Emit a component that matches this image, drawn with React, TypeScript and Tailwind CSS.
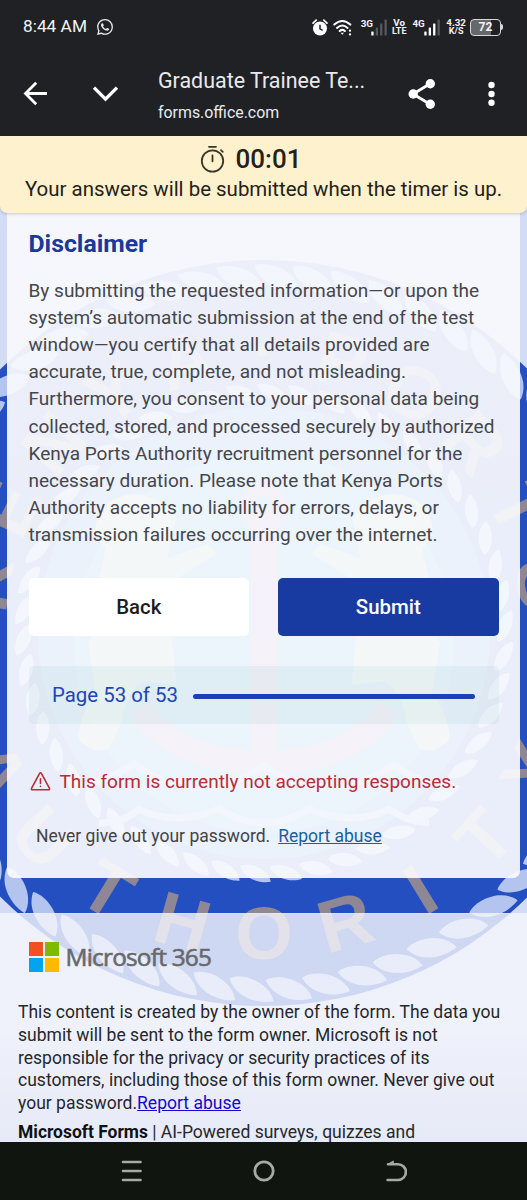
import type { ReactNode } from "react";

const LEAF = "M-25,-12 C-10,-19 20,-9 25,12 C8,16 -18,9 -25,-12 Z";

function Rope({ radius, count, scale, fill }: { radius: number; count: number; scale: number; fill: string }) {
  return (
    <g fill={fill}>
      {Array.from({ length: count }, (_, i) => (
        <path key={i} d={LEAF} transform={`rotate(${(i * 360) / count + 2}) translate(0 ${radius}) scale(${scale})`} />
      ))}
    </g>
  );
}

function RingText({ text, start, step, bottom }: { text: string; start: number; step: number; bottom?: boolean }) {
  return (
    <g fill="#8f8793" fontFamily="Liberation Sans" fontWeight="700" fontSize="74" textAnchor="middle">
      {text.split("").map((ch, i) => (
        <text key={i} transform={bottom ? `rotate(${start - i * step}) translate(0 326)` : `rotate(${start + i * step}) translate(0 -258)`}>
          {ch}
        </text>
      ))}
    </g>
  );
}

function Lion() {
  return (
    <g fill="#e6e48c" opacity="0.75">
      <path d="M88 -115 q14 -22 40 -24 q30 2 38 24 q8 16 -8 30 l8 34 q-18 8 -22 20 l30 38 q-8 16 -22 16 l-30 -8 q-6 -40 -20 -60 l-54 -34 8 -10 40 14 q-2 -20 -8 -40 z" />
      <path d="M92 0 q20 -14 50 -12 q26 6 34 22 l-8 50 q16 20 18 46 q-18 18 -32 8 l-12 -26 q-2 -24 -20 -40 l-34 4 z" />
    </g>
  );
}

function Emblem() {
  return (
    <svg className="absolute left-[-126px] top-[107px]" width="780" height="780" viewBox="-390 -390 780 780">
      <circle r="373" fill="#244fc0" />
      <Rope radius={357} count={60} scale={0.9} fill="#b3c4ee" />
      <RingText text="KENYA·PORTS" start={-80} step={16} />
      <RingText text="AUTHORITY" start={62.8} step={15.7} bottom />
      <circle r="226" fill="#3a86dc" />
      <circle cy="10" r="190" fill="#3fabe0" />
      <Rope radius={241} count={50} scale={0.62} fill="#b3c4ee" />
      <Lion />
      <g transform="scale(-1 1)">
        <Lion />
      </g>
      <g fill="none" stroke="#e07c9c" opacity="0.8">
        <path d="M0 -125 V130" strokeWidth="26" />
        <circle cy="-125" r="18" strokeWidth="12" />
        <path d="M-125 75 Q-90 128 0 130 Q90 128 125 75" strokeWidth="24" />
      </g>
      <path d="M-190 152 q30 0 60 -22 q30 24 65 24 t65 -22 q30 24 65 22 t65 -22 q30 22 60 20" fill="none" stroke="#a9bbe9" strokeWidth="7" />
      <path d="M-165 190 q25 0 40 -14 q35 18 80 0 q45 28 90 0 q45 18 80 0 q20 14 40 14" fill="none" stroke="#a9bbe9" strokeWidth="7" />
    </svg>
  );
}

function Signal({ lit }: { lit: number }) {
  const bars = [4, 8, 12, 16];
  return (
    <svg width="16" height="17" viewBox="0 0 16 17">
      {bars.map((h, i) => (
        <rect key={i} x={i * 4.4 + 0.3} y={16.5 - h} width="2.3" height={h} rx="0.6" fill={i < lit ? "#fff" : "#56585d"} />
      ))}
    </svg>
  );
}

function Stack({ a, b }: { a: string; b: string }) {
  return (
    <div className="flex flex-col items-center text-[9.8px] font-bold leading-[9px]">
      <span>{a}</span>
      <span className="text-[9px]">{b}</span>
    </div>
  );
}

function StatusBar() {
  return (
    <div className="flex h-[54px] items-center pl-[23px] pr-[24px] text-[#f3f4f5]">
      <span className="text-[17.3px] leading-none">8:44 AM</span>
      <svg className="ml-[10.5px]" width="16" height="16" viewBox="0 0 24 24" fill="#e6e7e9">
        <path d="M17.47 14.38c-.3-.15-1.76-.87-2.03-.97-.27-.1-.47-.15-.67.15-.2.3-.77.97-.94 1.16-.17.2-.35.22-.64.08-.3-.15-1.26-.46-2.39-1.48-.88-.79-1.48-1.76-1.65-2.06-.17-.3-.02-.46.13-.6.13-.14.3-.35.44-.53.15-.17.2-.3.3-.49.1-.2.05-.37-.02-.52-.08-.15-.67-1.61-.92-2.2-.24-.59-.49-.51-.67-.51l-.57-.02c-.2 0-.52.08-.79.37-.27.3-1.04 1.02-1.04 2.48s1.07 2.88 1.21 3.07c.15.2 2.1 3.2 5.08 4.49.71.3 1.26.49 1.69.62.71.23 1.36.2 1.87.12.57-.09 1.76-.72 2.01-1.41.25-.7.25-1.29.17-1.41-.07-.13-.27-.2-.57-.35M12.05 21.79h0a9.87 9.87 0 0 1-5.03-1.38l-.36-.21-3.74.98 1-3.65-.24-.37a9.86 9.86 0 0 1-1.51-5.26c0-5.45 4.44-9.88 9.89-9.88a9.83 9.83 0 0 1 9.88 9.89c0 5.45-4.44 9.88-9.89 9.88m8.41-18.3A11.8 11.8 0 0 0 12.05 0C5.5 0 .16 5.34.16 11.89c0 2.1.55 4.14 1.59 5.95L.06 24l6.3-1.65a11.9 11.9 0 0 0 5.69 1.45h0c6.55 0 11.89-5.34 11.89-11.89a11.8 11.8 0 0 0-3.48-8.42" />
      </svg>
      <div className="ml-auto flex items-center">
        <svg width="16" height="17" viewBox="0 0 16 17">
          <circle cx="8" cy="9.5" r="7" fill="#fff" />
          <path d="M1 4.2 4.2 1.2M15 4.2 11.8 1.2" stroke="#fff" strokeWidth="1.7" strokeLinecap="round" />
          <path d="M8 5.8v4l2.6 1.5" fill="none" stroke="#202124" strokeWidth="1.5" />
        </svg>
        <svg className="ml-[5px]" width="20" height="17" viewBox="0 0 20 17" fill="none" stroke="#fff" strokeWidth="2" strokeLinecap="round">
          <path d="M1.3 5.6Q9.3-1.6 17.3 5.6M4 8.9q5.3-4.8 10.6 0M6.7 12q2.6-2.2 5.2 0" />
          <path d="m7.6 13.7 1.7 2 1.7-2z" fill="#fff" stroke="none" />
          <path d="M17 11.6v.1M17 15.3v.1" strokeWidth="2.3" />
        </svg>
        <div className="ml-[8px] flex items-start">
          <span className="mr-[-2px] text-[9.8px] font-bold leading-[9px]">3G</span>
          <Signal lit={1} />
        </div>
        <div className="ml-[5px]"><Stack a="Vo" b="LTE" /></div>
        <div className="ml-[6px] flex items-start">
          <span className="mr-[-1px] text-[9.8px] font-bold leading-[9px]">4G</span>
          <Signal lit={3} />
        </div>
        <div className="ml-[6.5px]"><Stack a="4.32" b="K/S" /></div>
        <div className="ml-[4px] flex items-center">
          <div className="flex h-[17px] w-[31px] items-center justify-center rounded-[4px] border-[1.5px] border-[#d7d8da] bg-[linear-gradient(90deg,#66686c_0_70%,#202124_70%)] text-[12px] font-bold leading-none">72</div>
          <div className="h-[6px] w-[2px] rounded-r bg-[#d7d8da]" />
        </div>
      </div>
    </div>
  );
}

function Toolbar() {
  return (
    <div className="flex h-[82px] items-start text-white">
      <svg className="ml-[23px] mt-[27px]" width="25" height="25" viewBox="0 0 25 25" fill="none" stroke="#fff" strokeWidth="2.8">
        <path d="M24 12.5H3M13.2 1.8 2.5 12.5l10.7 10.7" />
      </svg>
      <svg className="ml-[44px] mt-[31px]" width="28" height="18" viewBox="0 0 28 18" fill="none" stroke="#fff" strokeWidth="3.4">
        <path d="m2 2.6 11.5 11.5L25 2.6" />
      </svg>
      <div className="ml-[38px] mt-[13px] w-[220px] whitespace-nowrap">
        <div className="text-[21.45px] leading-[28px] text-[#e8eaed]">Graduate Trainee Te...</div>
        <div className="mt-[6px] text-[15.9px] leading-[24px] text-[#e8eaed]">forms.office.com</div>
      </div>
      <svg className="ml-[30px] mt-[24px]" width="28" height="32" viewBox="0 0 28 32" fill="#fff">
        <path d="M22.5 5.5 5 16l17.5 10.5" fill="none" stroke="#fff" strokeWidth="2.8" />
        <circle cx="22.3" cy="5.7" r="4.7" />
        <circle cx="5.2" cy="16" r="4.7" />
        <circle cx="22.3" cy="26.3" r="4.7" />
      </svg>
      <svg className="ml-[51px] mt-[27px]" width="9" height="26" viewBox="0 0 9 26" fill="#fff">
        <circle cx="4.5" cy="4" r="3.2" />
        <circle cx="4.5" cy="13" r="3.2" />
        <circle cx="4.5" cy="21.7" r="3.2" />
      </svg>
    </div>
  );
}

function TimerBanner() {
  return (
    <div className="relative z-10 flex h-[77px] flex-col items-center rounded-b-[7px] bg-[#fef1cd] pt-[8px] text-[#242119] shadow-[0_1px_3px_rgba(60,60,90,0.25)]">
      <div className="flex h-[30px] items-center gap-[11px] pr-[26px]">
        <svg width="25" height="28" viewBox="0 0 25 28" fill="none" stroke="#3a362b" strokeWidth="1.8" strokeLinecap="round">
          <circle cx="12.5" cy="16" r="10.7" />
          <path d="M9 1.8h7M12.5 10.3v6M21 5.2l1.8 1.6" />
        </svg>
        <span className="text-[26px] font-medium leading-[30px]">00:01</span>
      </div>
      <p className="whitespace-nowrap text-[20.47px] leading-[31px]">Your answers will be submitted when the timer is up.</p>
    </div>
  );
}

function Action({ children, primary }: { children: ReactNode; primary?: boolean }) {
  return (
    <button
      className={
        primary
          ? "h-[58.5px] flex-1 rounded-[5px] bg-[#183ba2] pt-[1px] text-[20.4px] font-medium text-white"
          : "h-[58.5px] flex-1 rounded-[5px] bg-white pt-[1px] text-[20.4px] font-medium text-[#1d1d1f]"
      }
    >
      {children}
    </button>
  );
}

const LINES = [
  "By submitting the requested information—or upon the",
  "system’s automatic submission at the end of the test",
  "window—you certify that all details provided are",
  "accurate, true, complete, and not misleading.",
  "Furthermore, you consent to your personal data being",
  "collected, stored, and processed securely by authorized",
  "Kenya Ports Authority recruitment personnel for the",
  "necessary duration. Please note that Kenya Ports",
  "Authority accepts no liability for errors, delays, or",
  "transmission failures occurring over the internet.",
];

function FormCard() {
  return (
    <div className="relative mx-[7px] h-[665px] rounded-b-[7px] bg-[linear-gradient(180deg,rgba(247,248,253,0.95),rgba(249,250,254,0.93)_50%)] px-[21.5px] pt-[14.5px]">
      <h1 className="text-[24.8px] font-bold leading-[32px] text-[#1b389b]">Disclaimer</h1>
      <div className="mt-[17px] whitespace-nowrap text-[19.03px] leading-[27.2px] text-[#45464b]">
        {LINES.map((l) => (
          <p key={l}>{l}</p>
        ))}
      </div>
      <div className="mt-[29px] flex gap-[29px]">
        <Action>Back</Action>
        <Action primary>Submit</Action>
      </div>
      <div className="mt-[29.5px] flex h-[58px] items-center rounded-[4px] bg-[#0a8c82]/6 pl-[23.5px] pr-[24px]">
        <span className="whitespace-nowrap text-[20.4px] leading-[30px] text-[#2344b6]">Page 53 of 53</span>
        <div className="ml-[15px] mt-[4px] h-[5.5px] flex-1 rounded-full bg-[#1a41b9]" />
      </div>
      <div className="mt-[43px] flex h-[30px] items-center gap-[8.5px] pl-[1.5px] text-[#bb2a3a]">
        <svg width="21" height="21" viewBox="0 0 21 21" fill="none" stroke="#bb2a3a" strokeWidth="1.6" strokeLinejoin="round" strokeLinecap="round">
          <path d="M9.6 2.3a1 1 0 0 1 1.8 0l8.1 15a1 1 0 0 1-.9 1.5H2.4a1 1 0 0 1-.9-1.5z" />
          <path d="M10.5 7.8v4.7M10.5 15.4v.1" />
        </svg>
        <span className="whitespace-nowrap pt-[1px] text-[19.02px]">This form is currently not accepting responses.</span>
      </div>
      <div className="mt-[26px] flex h-[28px] items-center gap-[8px] whitespace-nowrap pl-[7.5px] text-[17.5px] text-[#424346]">
        <span>Never give out your password.</span>
        <a className="text-[#17609f] underline">Report abuse</a>
      </div>
    </div>
  );
}

function Footer() {
  return (
    <div className="relative mt-[35px] h-[228.5px] overflow-hidden border-t border-white/30 bg-[linear-gradient(180deg,rgba(245,246,252,0.82)_50%,rgba(234,236,248,0.85))] text-[17.54px] leading-[22.8px] text-[#26272b]">
      <div className="mt-[28px] flex h-[30px] items-center pl-[28.5px]">
        <div className="grid h-[30px] w-[30px] grid-cols-2 gap-[2px]">
          <i className="bg-[#f25022]" />
          <i className="bg-[#7fba00]" />
          <i className="bg-[#00a4ef]" />
          <i className="bg-[#ffb900]" />
        </div>
        <span className="ml-[7px] whitespace-nowrap font-['Open_Sans'] text-[24.4px] font-normal tracking-[-0.78px] text-[#68696c] [-webkit-text-stroke:0.6px_#68696c]">Microsoft 365</span>
      </div>
      <div className="mt-[29px] whitespace-nowrap pl-[18px]">
        <p>This content is created by the owner of the form. The data you</p>
        <p>submit will be sent to the form owner. Microsoft is not</p>
        <p>responsible for the privacy or security practices of its</p>
        <p>customers, including those of this form owner. Never give out</p>
        <p>your password.<a className="text-[#1408d0] underline">Report abuse</a></p>
        <p className="mt-[6px]"><b className="text-[17.45px] font-bold text-[#101114]">Microsoft Forms</b> | AI-Powered surveys, quizzes and</p>
      </div>
    </div>
  );
}

function NavBar() {
  return (
    <div className="relative flex flex-1 items-center bg-[#101510]">
      <svg className="ml-[121px]" width="21" height="22" viewBox="0 0 21 22" stroke="#a5aaa5" strokeWidth="2.6" strokeLinecap="round">
        <path d="M2 2h17.5M2 11h17.5M2 20h17.5" />
      </svg>
      <svg className="ml-[110.5px]" width="22" height="22" viewBox="0 0 22 22" fill="none" stroke="#a5aaa5" strokeWidth="2.8">
        <circle cx="11" cy="11" r="9.2" />
      </svg>
      <svg className="ml-[110px]" width="22" height="22" viewBox="0 0 22 22" fill="none" stroke="#a5aaa5" strokeWidth="2.6" strokeLinecap="round" strokeLinejoin="round">
        <path d="M3 4.2h10a7.9 7.9 0 0 1 0 15.8H2.6" />
        <path d="M8.2 1.2V4L2.6 4.4z" fill="#a5aaa5" strokeWidth="1.2" />
      </svg>
    </div>
  );
}

export default function App() {
  return (
    <div className="relative flex h-[1200px] w-[527px] flex-col overflow-hidden bg-[#202124] font-[Roboto,sans-serif]">
      <StatusBar />
      <Toolbar />
      <main className="relative h-[1005.5px] overflow-hidden bg-[#d3dcf5]">
        <Emblem />
        <TimerBanner />
        <FormCard />
        <Footer />
      </main>
      <NavBar />
    </div>
  );
}
